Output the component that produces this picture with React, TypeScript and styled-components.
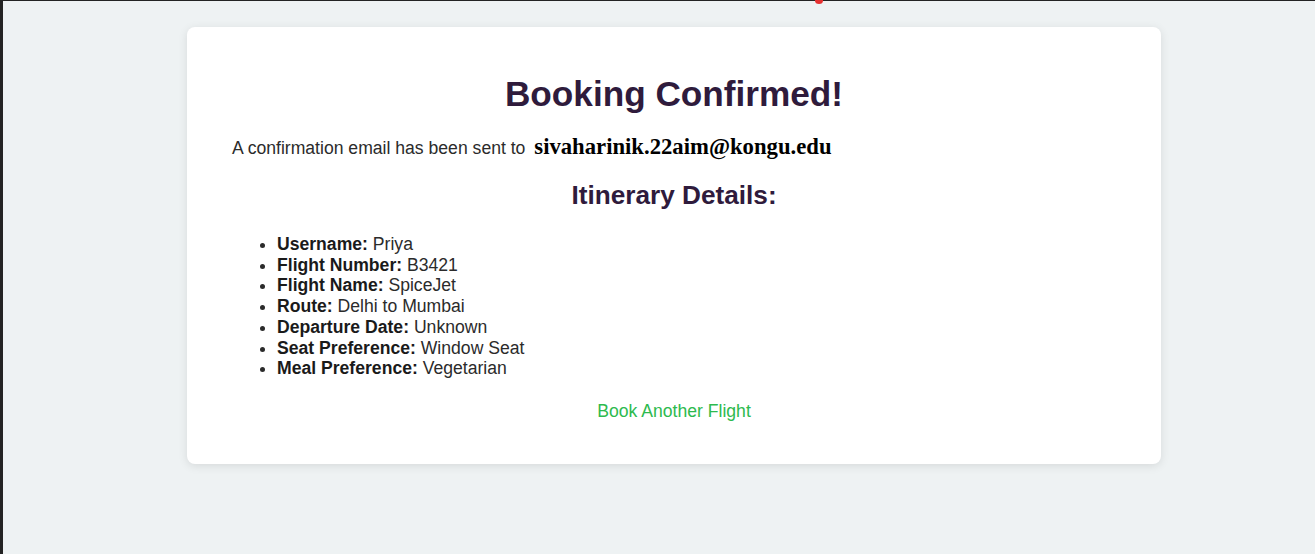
import React from "react";
import styled, { createGlobalStyle } from "styled-components";

const GlobalStyle = createGlobalStyle`
  html, body { margin: 0; padding: 0; }
  body {
    background: #eef2f3;
    font-family: "Liberation Sans", Arial, sans-serif;
    width: 1315px;
    height: 554px;
    overflow: hidden;
  }
`;

const Frame = styled.div`
  position: relative;
  box-sizing: border-box;
  width: 1315px;
  height: 554px;
  border-top: 1px solid #232323;
  border-left: 3px solid #232323;
  background: #eef2f3;
  padding: 26px 154px 0 184px;
`;

const RedDot = styled.span`
  position: absolute;
  top: -4px;
  left: 812px;
  width: 8px;
  height: 7px;
  border-radius: 50%;
  background: #e53030;
`;

const Card = styled.div`
  box-sizing: border-box;
  width: 974px;
  height: 437px;
  background: #ffffff;
  border-radius: 8px;
  box-shadow: 0 2px 10px rgba(0, 0, 0, 0.1);
  padding: 44px 45px 0 45px;
`;

const Title = styled.h1`
  margin: 0;
  text-align: center;
  font-size: 35.2px;
  font-weight: 700;
  color: #2f1b3c;
  line-height: 46px;
`;

const EmailLine = styled.p`
  margin: 17px 0 0 0;
  font-size: 17.6px;
  color: #2b2b2b;
  line-height: 26px;
`;

const Email = styled.strong`
  font-family: "Liberation Serif", "Times New Roman", serif;
  font-size: 22.7px;
  color: #000;
  margin-left: 4px;
`;

const SubTitle = styled.h2`
  margin: 19px 0 0 0;
  text-align: center;
  font-size: 26.2px;
  font-weight: 700;
  color: #2f1b3c;
  line-height: 30px;
`;

const List = styled.ul`
  margin: 24px 0 0 0;
  padding-left: 45px;
  font-size: 17.6px;
  line-height: 20.7px;
  color: #2b2b2b;
`;

const Item = styled.li``;

const Label = styled.strong`
  color: #1a1a1a;
`;

const LinkRow = styled.div`
  margin-top: 22px;
  text-align: center;
`;

const Link = styled.a`
  color: #2dba4e;
  font-size: 17.6px;
  text-decoration: none;
  line-height: 20px;
`;

const details: [string, string][] = [
  ["Username", "Priya"],
  ["Flight Number", "B3421"],
  ["Flight Name", "SpiceJet"],
  ["Route", "Delhi to Mumbai"],
  ["Departure Date", "Unknown"],
  ["Seat Preference", "Window Seat"],
  ["Meal Preference", "Vegetarian"],
];

export default function App() {
  return (
    <>
      <GlobalStyle />
      <Frame>
        <RedDot />
        <Card>
          <Title>Booking Confirmed!</Title>
          <EmailLine>
            A confirmation email has been sent to <Email>sivaharinik.22aim@kongu.edu</Email>
          </EmailLine>
          <SubTitle>Itinerary Details:</SubTitle>
          <List>
            {details.map(([k, v]) => (
              <Item key={k}>
                <Label>{k}:</Label> {v}
              </Item>
            ))}
          </List>
          <LinkRow>
            <Link href="#">Book Another Flight</Link>
          </LinkRow>
        </Card>
      </Frame>
    </>
  );
}
